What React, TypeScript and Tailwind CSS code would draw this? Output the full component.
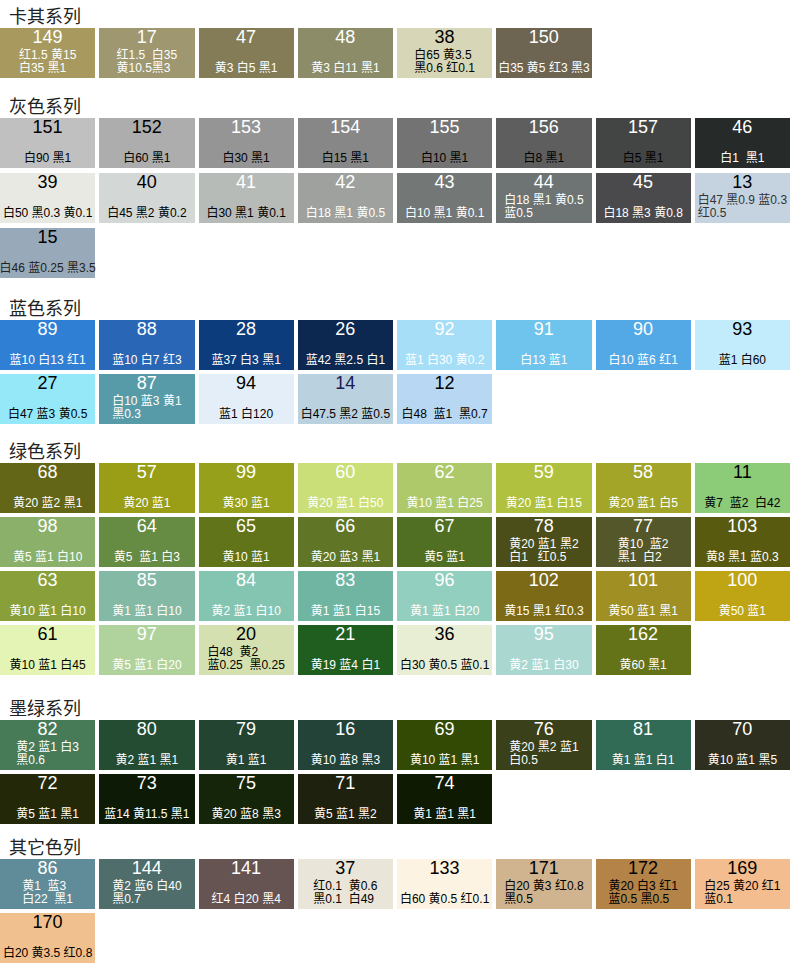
type Swatch = {
  n: string;
  bg: string;
  lines: string[];
  num?: string;
  sub?: string;
};

type Section = {
  title: string;
  mt: string;
  gap: string;
  items: Swatch[];
};

const W = "text-white";
const B = "text-black";

const sections: Section[] = [
  {
    title: "卡其系列",
    mt: "pt-[6px]",
    gap: "gap-y-[4px]",
    items: [
      { n: "149", bg: "bg-[#a89a5e]", lines: ["红1.5 黄15", "白35 黑1"] },
      { n: "17", bg: "bg-[#9e9770]", lines: ["红1.5  白35", "黄10.5黑3"] },
      { n: "47", bg: "bg-[#837c57]", lines: ["黄3 白5 黑1"] },
      { n: "48", bg: "bg-[#8c8d68]", lines: ["黄3 白11 黑1"] },
      { n: "38", bg: "bg-[#d7d7b7]", lines: ["白65 黄3.5", "黑0.6 红0.1"], num: B, sub: B },
      { n: "150", bg: "bg-[#6d6452]", lines: ["白35 黄5 红3 黑3"] },
    ],
  },
  {
    title: "灰色系列",
    mt: "mt-[18px]",
    gap: "gap-y-[5px]",
    items: [
      { n: "151", bg: "bg-[#c0c0c0]", lines: ["白90 黑1"], num: B, sub: B },
      { n: "152", bg: "bg-[#adadad]", lines: ["白60 黑1"], num: B, sub: B },
      { n: "153", bg: "bg-[#959595]", lines: ["白30 黑1"], sub: B },
      { n: "154", bg: "bg-[#878787]", lines: ["白15 黑1"], sub: B },
      { n: "155", bg: "bg-[#737373]", lines: ["白10 黑1"], sub: B },
      { n: "156", bg: "bg-[#5e5e5e]", lines: ["白8 黑1"], sub: B },
      { n: "157", bg: "bg-[#434545]", lines: ["白5 黑1"], sub: B },
      { n: "46", bg: "bg-[#262b2a]", lines: ["白1  黑1"] },
      { n: "39", bg: "bg-[#e8e9e3]", lines: ["白50 黑0.3 黄0.1"], num: B, sub: B },
      { n: "40", bg: "bg-[#d3d8d6]", lines: ["白45 黑2 黄0.2"], num: B, sub: B },
      { n: "41", bg: "bg-[#b6bbb8]", lines: ["白30 黑1 黄0.1"], sub: B },
      { n: "42", bg: "bg-[#9ea19d]", lines: ["白18 黑1 黄0.5"] },
      { n: "43", bg: "bg-[#737776]", lines: ["白10 黑1 黄0.1"] },
      { n: "44", bg: "bg-[#6e7473]", lines: ["白18 黑1 黄0.5", "蓝0.5"] },
      { n: "45", bg: "bg-[#4a4a4c]", lines: ["白18 黑3 黄0.8"] },
      { n: "13", bg: "bg-[#c5d3e0]", lines: ["白47 黑0.9 蓝0.3", "红0.5"], num: B, sub: "text-[#333]" },
      { n: "15", bg: "bg-[#98aab9]", lines: ["白46 蓝0.25 黑3.5"], num: B, sub: "text-[#222]" },
    ],
  },
  {
    title: "蓝色系列",
    mt: "mt-[20px]",
    gap: "gap-y-[4px]",
    items: [
      { n: "89", bg: "bg-[#2f7fd5]", lines: ["蓝10 白13 红1"] },
      { n: "88", bg: "bg-[#2a66b6]", lines: ["蓝10 白7 红3"] },
      { n: "28", bg: "bg-[#0d3c7c]", lines: ["蓝37 白3 黑1"] },
      { n: "26", bg: "bg-[#0c2750]", lines: ["蓝42 黑2.5 白1"] },
      { n: "92", bg: "bg-[#a6def8]", lines: ["蓝1 白30 黄0.2"] },
      { n: "91", bg: "bg-[#6ec4ec]", lines: ["白13 蓝1"] },
      { n: "90", bg: "bg-[#53a9e6]", lines: ["白10 蓝6 红1"] },
      { n: "93", bg: "bg-[#c2ecfb]", lines: ["蓝1 白60"], num: B, sub: B },
      { n: "27", bg: "bg-[#95e8f8]", lines: ["白47 蓝3 黄0.5"], num: B, sub: B },
      { n: "87", bg: "bg-[#589ba8]", lines: ["白10 蓝3 黄1", "黑0.3"] },
      { n: "94", bg: "bg-[#e3eef8]", lines: ["蓝1 白120"], num: B, sub: B },
      { n: "14", bg: "bg-[#bad1e0]", lines: ["白47.5 黑2 蓝0.5"], num: "text-[#1c1a4e]", sub: B },
      { n: "12", bg: "bg-[#b7d7f3]", lines: ["白48  蓝1  黑0.7"], num: B, sub: B },
    ],
  },
  {
    title: "绿色系列",
    mt: "mt-[17px]",
    gap: "gap-y-[4px]",
    items: [
      { n: "68", bg: "bg-[#636517]", lines: ["黄20 蓝2 黑1"] },
      { n: "57", bg: "bg-[#9a9e16]", lines: ["黄20 蓝1"] },
      { n: "99", bg: "bg-[#96a01a]", lines: ["黄30 蓝1"] },
      { n: "60", bg: "bg-[#cadf78]", lines: ["黄20 蓝1 白50"] },
      { n: "62", bg: "bg-[#aec96a]", lines: ["黄10 蓝1 白25"] },
      { n: "59", bg: "bg-[#afc13f]", lines: ["黄20 蓝1 白15"] },
      { n: "58", bg: "bg-[#a2a527]", lines: ["黄20 蓝1 白5"] },
      { n: "11", bg: "bg-[#8ccb78]", lines: ["黄7  蓝2  白42"], num: B, sub: B },
      { n: "98", bg: "bg-[#8ab06a]", lines: ["黄5 蓝1 白10"] },
      { n: "64", bg: "bg-[#668b42]", lines: ["黄5  蓝1 白3"] },
      { n: "65", bg: "bg-[#627419]", lines: ["黄10 蓝1"] },
      { n: "66", bg: "bg-[#607626]", lines: ["黄20 蓝3 黑1"] },
      { n: "67", bg: "bg-[#506f23]", lines: ["黄5 蓝1"] },
      { n: "78", bg: "bg-[#4b4e18]", lines: ["黄20 蓝1 黑2", "白1   红0.5"] },
      { n: "77", bg: "bg-[#545729]", lines: ["黄10  蓝2", "黑1  白2"] },
      { n: "103", bg: "bg-[#585a10]", lines: ["黄8 黑1 蓝0.3"] },
      { n: "63", bg: "bg-[#89a03a]", lines: ["黄10 蓝1 白10"] },
      { n: "85", bg: "bg-[#84b9a6]", lines: ["黄1 蓝1 白10"] },
      { n: "84", bg: "bg-[#84c5b1]", lines: ["黄2 蓝1 白10"] },
      { n: "83", bg: "bg-[#70b5a2]", lines: ["黄1 蓝1 白15"] },
      { n: "96", bg: "bg-[#93cfbf]", lines: ["黄1 蓝1 白20"] },
      { n: "102", bg: "bg-[#7c6a17]", lines: ["黄15 黑1 红0.3"] },
      { n: "101", bg: "bg-[#a08f22]", lines: ["黄50 蓝1 黑1"] },
      { n: "100", bg: "bg-[#bfa413]", lines: ["黄50 蓝1"] },
      { n: "61", bg: "bg-[#e3f4b4]", lines: ["黄10 蓝1 白45"], num: B, sub: B },
      { n: "97", bg: "bg-[#b0d39e]", lines: ["黄5 蓝1 白20"] },
      { n: "20", bg: "bg-[#d4e0b0]", lines: ["白48  黄2", "蓝0.25  黑0.25"], num: B, sub: B },
      { n: "21", bg: "bg-[#1f5e1f]", lines: ["黄19 蓝4 白1"] },
      { n: "36", bg: "bg-[#e8eed4]", lines: ["白30 黄0.5 蓝0.1"], num: B, sub: B },
      { n: "95", bg: "bg-[#aad8d0]", lines: ["黄2 蓝1 白30"] },
      { n: "162", bg: "bg-[#657318]", lines: ["黄60 黑1"] },
    ],
  },
  {
    title: "墨绿系列",
    mt: "mt-[23px]",
    gap: "gap-y-[4px]",
    items: [
      { n: "82", bg: "bg-[#477b58]", lines: ["黄2 蓝1 白3", "黑0.6"] },
      { n: "80", bg: "bg-[#234c33]", lines: ["黄2 蓝1 黑1"] },
      { n: "79", bg: "bg-[#224430]", lines: ["黄1 蓝1"] },
      { n: "16", bg: "bg-[#234238]", lines: ["黄10 蓝8 黑3"] },
      { n: "69", bg: "bg-[#334a05]", lines: ["黄10 蓝1 黑1"] },
      { n: "76", bg: "bg-[#3a4019]", lines: ["黄20 黑2 蓝1", "白0.5"] },
      { n: "81", bg: "bg-[#316b56]", lines: ["黄1 蓝1 白1"] },
      { n: "70", bg: "bg-[#2e2f1e]", lines: ["黄10 蓝1 黑5"] },
      { n: "72", bg: "bg-[#232808]", lines: ["黄5 蓝1 黑1"] },
      { n: "73", bg: "bg-[#0d1b06]", lines: ["蓝14 黄11.5 黑1"] },
      { n: "75", bg: "bg-[#152509]", lines: ["黄20 蓝8 黑3"] },
      { n: "71", bg: "bg-[#1e210d]", lines: ["黄5 蓝1 黑2"] },
      { n: "74", bg: "bg-[#0f1a03]", lines: ["黄1 蓝1 黑1"] },
    ],
  },
  {
    title: "其它色列",
    mt: "mt-[13px]",
    gap: "gap-y-[4px]",
    items: [
      { n: "86", bg: "bg-[#5f8c98]", lines: ["黄1  蓝3", "白22  黑1"] },
      { n: "144", bg: "bg-[#4e6d6b]", lines: ["黄2 蓝6 白40", "黑0.7"] },
      { n: "141", bg: "bg-[#665453]", lines: ["红4 白20 黑4"] },
      { n: "37", bg: "bg-[#e9e5d9]", lines: ["红0.1  黄0.6", "黑0.1  白49"], num: B, sub: B },
      { n: "133", bg: "bg-[#fcf3e2]", lines: ["白60 黄0.5 红0.1"], num: B, sub: B },
      { n: "171", bg: "bg-[#cfb48f]", lines: ["白20 黄3 红0.8", "黑0.5"], num: B, sub: B },
      { n: "172", bg: "bg-[#b38347]", lines: ["黄20 白3 红1", "蓝0.5 黑0.5"], num: B, sub: B },
      { n: "169", bg: "bg-[#f4bd8f]", lines: ["白25 黄20 红1", "蓝0.1"], num: B, sub: B },
      { n: "170", bg: "bg-[#f0c08f]", lines: ["白20 黄3.5 红0.8"], num: B, sub: B },
    ],
  },
];

function Tile({ s }: { s: Swatch }) {
  return (
    <div className={`${s.bg} h-[50px] flex flex-col items-center`}>
      <div className={`${s.num ?? W} text-[18px] leading-[18px]`}>{s.n}</div>
      <div
        className={`${s.sub ?? W} mt-auto mb-[3px] text-left text-[12px] leading-[13px] whitespace-pre`}
      >
        {s.lines.map((l) => (
          <div key={l}>{l}</div>
        ))}
      </div>
    </div>
  );
}

export default function App() {
  return (
    <div className="w-[790px] bg-white pb-[11px] font-['Liberation_Sans','Noto_Sans_CJK_SC',sans-serif]">
      {sections.map((sec) => (
        <section key={sec.title} className={sec.mt}>
          <h2 className="pl-[9px] text-[18px] leading-[22px] text-[#222]">
            {sec.title}
          </h2>
          <div className={`grid grid-cols-8 gap-x-[4px] ${sec.gap}`}>
            {sec.items.map((s) => (
              <Tile key={s.n} s={s} />
            ))}
          </div>
        </section>
      ))}
    </div>
  );
}
